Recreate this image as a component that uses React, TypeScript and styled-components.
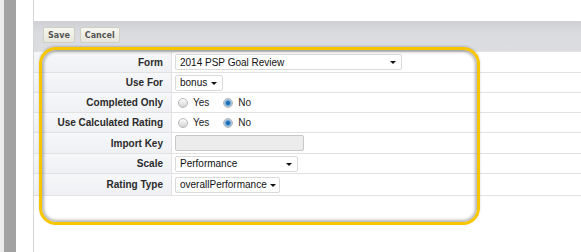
import styled, { createGlobalStyle } from 'styled-components'

const GlobalStyle = createGlobalStyle`
  body {
    margin: 0;
    background: #ffffff;
    font-family: "Liberation Sans", Arial, Helvetica, sans-serif;
  }
`

const rows = [
  { label: "Form", kind: "select", value: "2014 PSP Goal Review", width: 227, h: 21 },
  { label: "Use For", kind: "select", value: "bonus", width: 48, h: 20 },
  { label: "Completed Only", kind: "radio", h: 20 },
  { label: "Use Calculated Rating", kind: "radio", h: 20 },
  { label: "Import Key", kind: "input", width: 129, h: 21 },
  { label: "Scale", kind: "select", value: "Performance", width: 123, h: 20 },
  { label: "Rating Type", kind: "select", value: "overallPerformance", width: 105, h: 22 },
];

const Page = styled.div`
  display: flex;
  width: 581px;
  height: 252px;
  overflow: hidden;
  position: relative;
`

const Rail = styled.div`
  width: 12px;
  border-left: 4px solid #ececec;
  background: #a2a2a2;
  flex-shrink: 0;
`

const Gutter = styled.div`
  width: 17px;
  flex-shrink: 0;
  background: #fff;
`

const Main = styled.div`
  flex: 1;
  border-left: 1px solid #d6d6d6;
  display: flex;
  flex-direction: column;
`

const TopSpace = styled.div`
  height: 21px;
`

const Toolbar = styled.div`
  height: 30px;
  box-sizing: border-box;
  background: linear-gradient(#cfd0d4, #dadbdf 40%, #dcdde1);
  display: flex;
  align-items: flex-start;
  gap: 5px;
  padding: 6px 0 0 9px;
`

const Button = styled.div`
  height: 16px;
  box-sizing: border-box;
  padding: 0 4px;
  display: flex;
  align-items: center;
  border: 1px solid #cfcfc4;
  border-radius: 2px;
  background: linear-gradient(#f7f7f1, #e6e6dc);
  font-family: "DejaVu Sans", Verdana, sans-serif;
  font-size: 8px;
  font-weight: bold;
  color: #555;
`

const Table = styled.div`
  display: flex;
  flex-direction: column;
  border-top: 1px solid #e2e2e2;
`

const Row = styled.div<{ $h: number }>`
  display: flex;
  height: ${p => p.$h}px;
  box-sizing: border-box;
  border-bottom: 1px solid #e2e2e2;
`

const Label = styled.div`
  width: 138px;
  flex-shrink: 0;
  box-sizing: border-box;
  padding-right: 8px;
  display: flex;
  align-items: center;
  justify-content: flex-end;
  background: linear-gradient(#f6f7f9, #eef0f3);
  border-right: 1px solid #e2e2e2;
  font-size: 10px;
  font-weight: bold;
  color: #2a2a2a;
`

const Value = styled.div`
  flex: 1;
  display: flex;
  align-items: center;
  padding-left: 3px;
  font-size: 10px;
  color: #222;
`

const Select = styled.div<{ $w: number }>`
  width: ${p => p.$w}px;
  height: 16px;
  box-sizing: border-box;
  border: 1px solid #dadada;
  border-radius: 2px;
  background: #fff;
  display: flex;
  align-items: center;
  justify-content: space-between;
  gap: 3px;
  padding: 0 5px 0 4px;
  font-size: 10px;
  color: #111;
  white-space: nowrap;
`

const Arrow = styled.span`
  flex-shrink: 0;
  width: 0;
  height: 0;
  border-left: 3px solid transparent;
  border-right: 3px solid transparent;
  border-top: 3px solid #111;
  margin-top: 1px;
`

const TextBox = styled.div<{ $w: number }>`
  width: ${p => p.$w}px;
  height: 16px;
  box-sizing: border-box;
  border: 1px solid #c8c8c8;
  border-radius: 2px;
  background: #ececec;
`

const RadioGroup = styled.div`
  display: flex;
  align-items: center;
  padding-left: 3px;
`

const Radio = styled.span<{ $on?: boolean }>`
  width: 8px;
  height: 8px;
  border-radius: 50%;
  border: 1px solid #b8b8b8;
  background: ${p => p.$on
    ? "radial-gradient(circle at 50% 50%, #1d6db3 0 1.5px, #6fa6d6 2.5px, #d7e4ef 4.5px)"
    : "linear-gradient(#fdfdfd, #d4d4d4)"};
  margin-right: 5px;
`

const RadioText = styled.span`
  margin-right: 14px;
`

const Highlight = styled.div`
  position: absolute;
  left: 39px;
  top: 47px;
  width: 441px;
  height: 178px;
  box-sizing: border-box;
  border: 3px solid #f7c600;
  border-radius: 17px;
  box-shadow: inset 0 0 3px 2px rgba(90, 90, 90, 0.45), 0 -1px 2px rgba(90, 90, 90, 0.3);
  pointer-events: none;
`

export default function App() {
  return (
    <Page>
      <GlobalStyle />
      <Rail />
      <Gutter />
      <Main>
        <TopSpace />
        <Toolbar>
          <Button>Save</Button>
          <Button>Cancel</Button>
        </Toolbar>
        <Table>
          {rows.map((r, i) => (
            <Row key={i} $h={r.h}>
              <Label>{r.label}</Label>
              <Value>
                {r.kind === "select" && (
                  <Select $w={r.width!}>
                    <span>{r.value}</span>
                    <Arrow />
                  </Select>
                )}
                {r.kind === "input" && <TextBox $w={r.width!} />}
                {r.kind === "radio" && (
                  <RadioGroup>
                    <Radio />
                    <RadioText>Yes</RadioText>
                    <Radio $on />
                    <RadioText>No</RadioText>
                  </RadioGroup>
                )}
              </Value>
            </Row>
          ))}
        </Table>
      </Main>
      <Highlight />
    </Page>
  )
}
